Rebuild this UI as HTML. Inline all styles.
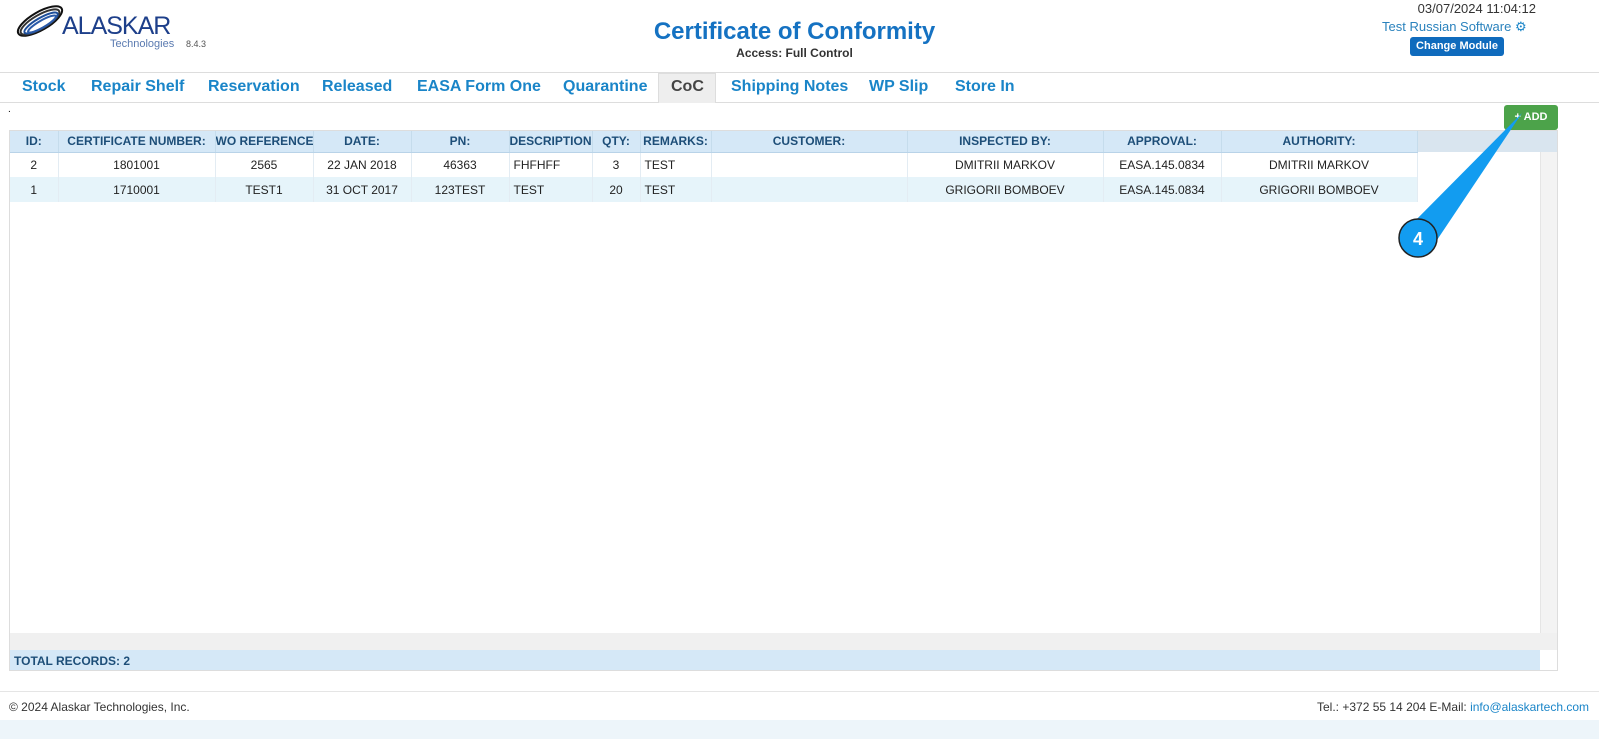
<!DOCTYPE html>
<html><head><meta charset="utf-8"><style>
*{box-sizing:border-box;margin:0;padding:0}
body{width:1599px;height:739px;background:#fff;font-family:"Liberation Sans",Arial,sans-serif;position:relative;overflow:hidden}
.abs{position:absolute}
.tab{position:absolute;top:78px;font-size:16px;font-weight:bold;color:#1a85c8}
table{border-collapse:collapse;position:absolute;left:10px;top:131px;width:1407px;font-size:12px;table-layout:fixed}
th{background:#d5e8f7;color:#1d4e78;height:21px;font-weight:bold;border-right:1px solid #c5dcec;border-bottom:1px solid #b9d3e8;overflow:hidden;white-space:nowrap;padding:0}
td{height:25px;text-align:center;color:#222;border-right:1px solid #e3ecf3;white-space:nowrap;overflow:hidden;padding:0}
tr.alt td{background:#e6f4fa}
</style></head><body>
<svg class="abs" style="left:10px;top:4px" width="60" height="36" viewBox="0 0 60 36">
<g fill="none" stroke-width="2">
<ellipse cx="30" cy="17" rx="25" ry="9" transform="rotate(-30 30 17)" stroke="#111"/>
<ellipse cx="30" cy="18" rx="22" ry="7" transform="rotate(-30 30 18)" stroke="#333"/>
<ellipse cx="31" cy="19" rx="19" ry="5" transform="rotate(-30 31 19)" stroke="#1d4e9a"/>
<ellipse cx="32" cy="20" rx="16" ry="3.5" transform="rotate(-30 32 20)" stroke="#2a5aa8"/>
</g></svg>
<div class="abs" style="left:62px;top:12px;font-size:25px;color:#1d3f8a;letter-spacing:-1px">ALASKAR</div>
<div class="abs" style="left:110px;top:38px;font-size:11px;color:#5a7ab0">Technologies</div>
<div class="abs" style="left:186px;top:39px;font-size:9px;color:#555">8.4.3</div>
<div class="abs" style="left:0;width:1589px;top:18px;text-align:center;font-size:24px;font-weight:bold;color:#1572c2">Certificate of Conformity</div>
<div class="abs" style="left:0;width:1589px;top:46px;text-align:center;font-size:12px;font-weight:bold;color:#333">Access: Full Control</div>
<div class="abs" style="left:1380px;width:156px;top:1px;text-align:right;font-size:13px;color:#333">03/07/2024 11:04:12</div>
<div class="abs" style="left:1382px;top:19px;font-size:13px;color:#2a82bd">Test Russian Software <span style="color:#1a85c8">⚙</span></div>
<div class="abs" style="left:1410px;top:37px;width:94px;height:19px;background:#0f6bbd;border-radius:3px;color:#fff;font-size:11px;font-weight:bold;text-align:center;line-height:19px">Change Module</div>
<div class="abs" style="left:0;top:72px;width:1599px;border-top:1px solid #ddd"></div>
<div class="abs" style="left:0;top:102px;width:1599px;border-top:1px solid #ddd"></div>
<div class="abs" style="left:658px;top:73px;width:58px;height:30px;background:#eee;border:1px solid #ddd;border-bottom:none"></div>
<div class="tab" style="left:22px">Stock</div>
<div class="tab" style="left:91px">Repair Shelf</div>
<div class="tab" style="left:208px">Reservation</div>
<div class="tab" style="left:322px">Released</div>
<div class="tab" style="left:417px">EASA Form One</div>
<div class="tab" style="left:563px">Quarantine</div>
<div class="tab" style="left:671px;color:#444">CoC</div>
<div class="tab" style="left:731px">Shipping Notes</div>
<div class="tab" style="left:869px">WP Slip</div>
<div class="tab" style="left:955px">Store In</div>
<div class="abs" style="left:8px;top:104px;font-size:10px">.</div>
<div class="abs" style="left:1504px;top:105px;width:54px;height:25px;background:#4ca34a;border-radius:3px;color:#fff;font-size:11px;font-weight:bold;line-height:25px;text-align:center">+ ADD</div>
<div class="abs" style="left:9px;top:130px;width:1549px;height:541px;border:1px solid #ddd"></div>
<div class="abs" style="left:1417px;top:131px;width:140px;height:21px;background:#d9e5ef"></div>
<div class="abs" style="left:1540px;top:152px;width:17px;height:481px;background:#f3f3f3;border-left:1px solid #e5e5e5"></div>
<div class="abs" style="left:10px;top:633px;width:1547px;height:17px;background:#f0f0f0"></div>
<div class="abs" style="left:10px;top:650px;width:1530px;height:20px;background:#d5e8f7;font-size:12px;font-weight:bold;color:#1d4e78;padding:4px 4px">TOTAL RECORDS: 2</div>
<table>
<colgroup><col style="width:48px"><col style="width:157px"><col style="width:98px"><col style="width:98px"><col style="width:98px"><col style="width:83px"><col style="width:48px"><col style="width:71px"><col style="width:196px"><col style="width:196px"><col style="width:118px"><col style="width:196px"></colgroup>
<tr><th>ID:</th><th>CERTIFICATE NUMBER:</th><th style="text-align:left">WO REFERENCE:</th><th>DATE:</th><th>PN:</th><th style="text-align:left">DESCRIPTION:</th><th>QTY:</th><th>REMARKS:</th><th>CUSTOMER:</th><th>INSPECTED BY:</th><th>APPROVAL:</th><th>AUTHORITY:</th></tr>
<tr><td>2</td><td>1801001</td><td>2565</td><td>22 JAN 2018</td><td>46363</td><td style="text-align:left;padding-left:4px">FHFHFF</td><td>3</td><td style="text-align:left;padding-left:4px">TEST</td><td></td><td>DMITRII MARKOV</td><td>EASA.145.0834</td><td>DMITRII MARKOV</td></tr>
<tr class="alt"><td>1</td><td>1710001</td><td>TEST1</td><td>31 OCT 2017</td><td>123TEST</td><td style="text-align:left;padding-left:4px">TEST</td><td>20</td><td style="text-align:left;padding-left:4px">TEST</td><td></td><td>GRIGORII BOMBOEV</td><td>EASA.145.0834</td><td>GRIGORII BOMBOEV</td></tr>
</table>
<svg class="abs" style="left:1395px;top:108px" width="130" height="152"><polygon points="127,5 11,122 38,138" fill="#129cf0"/><circle cx="23" cy="130" r="19" fill="#129cf0" stroke="#222" stroke-width="1.5"/><text x="23" y="137" text-anchor="middle" fill="#fff" font-weight="bold" font-size="18" font-family="Liberation Sans">4</text></svg>
<div class="abs" style="left:0;top:691px;width:1599px;border-top:1px solid #e5e5e5"></div>
<div class="abs" style="left:9px;top:700px;font-size:12px;color:#333">© 2024 Alaskar Technologies, Inc.</div>
<div class="abs" style="right:10px;top:700px;font-size:12px;color:#333">Tel.: +372 55 14 204 E-Mail: <span style="color:#1a85c8">info@alaskartech.com</span></div>
<div class="abs" style="left:0;top:720px;width:1599px;height:19px;background:#edf5fa"></div>
</body></html>
